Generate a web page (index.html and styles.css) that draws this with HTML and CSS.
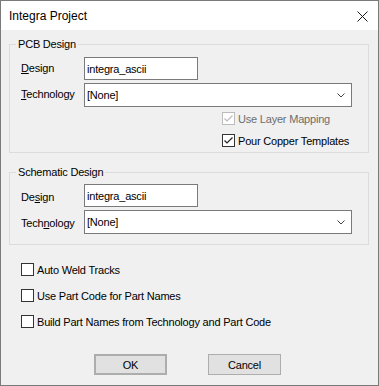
FILE: index.html
```html
<!DOCTYPE html>
<html lang="en">
<head>
    <meta charset="UTF-8">
    <title>Integra Project</title>
    <link rel="stylesheet" href="styles.css">
</head>
<body>
    <div class="window">
        <div class="titlebar">
            <span class="title">Integra Project</span>
            <svg class="close" width="11" height="11" viewBox="0 0 11 11">
                <path d="M0.5 0.5 L10.5 10.5 M10.5 0.5 L0.5 10.5" stroke="#1a1a1a" stroke-width="1" fill="none"/>
            </svg>
        </div>

        <div class="content">
            <fieldset class="group pcb">
                <legend>PCB Design</legend>
                <div class="group-body">
                    <div class="field-row">
                        <label><u>D</u>esign</label>
                        <div class="textbox">integra_ascii</div>
                    </div>
                    <div class="field-row">
                        <label><u>T</u>echnology</label>
                        <div class="combo">
                            <span>[None]</span>
                            <svg width="8" height="5" viewBox="0 0 8 5">
                                <polyline points="0.5,0.5 4,4 7.5,0.5" stroke="#444" stroke-width="1" fill="none"/>
                            </svg>
                        </div>
                    </div>
                    <div class="pcb-checks">
                        <div class="check-row disabled">
                            <span class="box checked">
                                <svg width="11" height="11" viewBox="0 0 11 11"><polyline points="1.5,5.5 4,8 9.5,2.5" stroke="#bcbcbc" stroke-width="1.2" fill="none"/></svg>
                            </span>
                            <span>Use Layer Mapping</span>
                        </div>
                        <div class="check-row">
                            <span class="box checked">
                                <svg width="11" height="11" viewBox="0 0 11 11"><polyline points="1.5,5.5 4,8 9.5,2.5" stroke="#222" stroke-width="1.2" fill="none"/></svg>
                            </span>
                            <span>Pour Copper Templates</span>
                        </div>
                    </div>
                </div>
            </fieldset>

            <fieldset class="group schematic">
                <legend>Schematic Design</legend>
                <div class="group-body">
                    <div class="field-row">
                        <label>De<u>s</u>ign</label>
                        <div class="textbox">integra_ascii</div>
                    </div>
                    <div class="field-row">
                        <label>Tech<u>n</u>ology</label>
                        <div class="combo">
                            <span>[None]</span>
                            <svg width="8" height="5" viewBox="0 0 8 5">
                                <polyline points="0.5,0.5 4,4 7.5,0.5" stroke="#444" stroke-width="1" fill="none"/>
                            </svg>
                        </div>
                    </div>
                </div>
            </fieldset>

            <div class="options">
                <div class="check-row"><span class="box"></span><span>Auto Weld Tracks</span></div>
                <div class="check-row"><span class="box"></span><span>Use Part Code for Part Names</span></div>
                <div class="check-row"><span class="box"></span><span>Build Part Names from Technology and Part Code</span></div>
            </div>

            <div class="buttons">
                <button class="btn default">OK</button>
                <button class="btn">Cancel</button>
            </div>
        </div>
    </div>
</body>
</html>
```

FILE: styles.css
```css
* {
    box-sizing: border-box;
}

body {
    margin: 0;
    font-family: "Liberation Sans", Arial, sans-serif;
    font-size: 11px;
    color: #000;
    background: #f0f0f0;
}

.window {
    width: 379px;
    height: 386px;
    border: 1px solid #7a7a7a;
    background: #f0f0f0;
    display: flex;
    flex-direction: column;
}

.titlebar {
    height: 29px;
    background: #fff;
    display: flex;
    align-items: center;
    justify-content: space-between;
    padding: 0 10px 0 8px;
    flex-shrink: 0;
}

.title {
    font-size: 12px;
    color: #000;
}

.close {
    margin-top: 1px;
}

.content {
    padding: 8px 8px 0 8px;
    letter-spacing: -0.2px;
}

.group {
    margin: 0;
    padding: 0;
    width: 360px;
    border: 1px solid #dcdcdc;
}

.group legend {
    margin-left: 6px;
    padding: 0 2px;
    line-height: 13px;
}

.group-body {
    padding: 6px 0 5px 11px;
    display: flex;
    flex-direction: column;
    gap: 3px;
}

.schematic {
    margin-top: 13px;
}

.schematic .group-body {
    padding-top: 5px;
    padding-bottom: 10px;
}

.field-row {
    display: flex;
    align-items: center;
}

.field-row label {
    width: 63px;
    margin-top: -2px;
}

.schematic .field-row label {
    margin-top: 2px;
}

.textbox,
.combo {
    height: 23px;
    background: #fff;
    border: 1px solid #7a7a7a;
    padding: 0 2px;
    display: flex;
    align-items: center;
    font-size: 11px;
}

.textbox {
    width: 114px;
}

.combo {
    width: 268px;
    height: 24px;
    justify-content: space-between;
    padding-right: 6px;
}

.combo svg {
    margin-top: 1px;
}

.pcb-checks {
    margin-top: 2px;
    padding-left: 201px;
    display: flex;
    flex-direction: column;
    gap: 9px;
}

.check-row {
    display: flex;
    align-items: center;
    gap: 3px;
    height: 13px;
    white-space: nowrap;
}

.box {
    width: 13px;
    height: 13px;
    border: 1px solid #333;
    background: #fff;
    display: flex;
    align-items: center;
    justify-content: center;
    flex-shrink: 0;
}

.disabled .box {
    border-color: #bcbcbc;
}

.disabled {
    color: #6d6d6d;
}

.options {
    margin-top: 18px;
    padding-left: 12px;
    display: flex;
    flex-direction: column;
    gap: 13px;
}

.buttons {
    margin-top: 26px;
    padding-left: 85px;
    display: flex;
    gap: 41px;
}

.btn {
    width: 73px;
    height: 21px;
    background: #e1e1e1;
    border: 1px solid #adadad;
    font-family: "Liberation Sans", Arial, sans-serif;
    font-size: 11px;
    letter-spacing: -0.2px;
    color: #000;
    padding: 0;
}

.btn.default {
    border: 2px solid #adadad;
}
```
